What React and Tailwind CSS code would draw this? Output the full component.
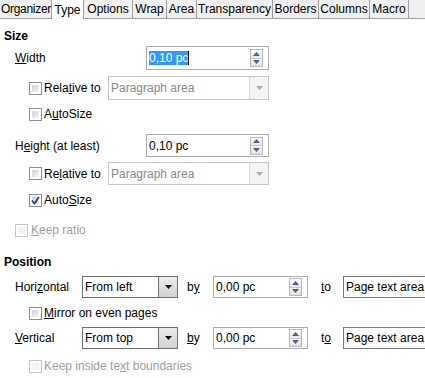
const TABS = [
  { label: "Organizer", w: "w-[52px]", cls: "justify-end tracking-[-0.3px]" },
  { label: "Type", w: "w-[32px]", active: true },
  { label: "Options", w: "w-[49px]" },
  { label: "Wrap", w: "w-[34px]" },
  { label: "Area", w: "w-[30px]" },
  { label: "Transparency", w: "w-[76px]" },
  { label: "Borders", w: "w-[46px]" },
  { label: "Columns", w: "w-[51px]" },
  { label: "Macro", w: "w-[39px]" },
];

function Arrow({ up, color = "#4d5f85" }) {
  return (
    <svg width="7" height="4" viewBox="0 0 7 4">
      <path d={up ? "M0 4 L3.5 0 L7 4 Z" : "M0 0 L7 0 L3.5 4 Z"} fill={color} />
    </svg>
  );
}

function Spin() {
  return (
    <div className="w-[13px] h-[18px] border border-[#b8b8b8] flex flex-col shrink-0">
      <div className="flex-1 flex items-center justify-center bg-gradient-to-b from-[#fbfbfb] to-[#e9e9e9] border-b border-[#c8c8c8]">
        <Arrow up />
      </div>
      <div className="flex-1 flex items-center justify-center bg-gradient-to-b from-[#f4f4f4] to-[#e2e2e2]">
        <Arrow />
      </div>
    </div>
  );
}

function SpinField({ value, w, selected }) {
  return (
    <div className={`${w} h-full border border-[#abadb3] bg-white flex items-center pl-[2px] pr-[5px] shrink-0`}>
      <div className="flex-1 flex items-center">
        {selected ? (
          <>
            <span className="bg-[#3399ff] text-white h-[14px] flex items-center">{value}</span>
            <span className="w-px h-[14px] bg-black" />
          </>
        ) : (
          value
        )}
      </div>
      <Spin />
    </div>
  );
}

function Combo({ value, w, disabled }) {
  return (
    <div
      className={`${w} h-full border flex shrink-0 bg-white ${
        disabled ? "border-[#c7c7c7] text-[#8a8a8a]" : "border-[#707070]"
      }`}
    >
      <div className="flex-1 flex items-center pl-[2px]">{value}</div>
      <div
        className={`w-[19px] flex items-center justify-center border-l ${
          disabled
            ? "border-[#dadada] bg-[#f4f4f4]"
            : "border-[#707070] bg-gradient-to-b from-[#ececec] to-[#d2d2d2]"
        }`}
      >
        <Arrow color={disabled ? "#a8a8a8" : "#000"} />
      </div>
    </div>
  );
}

function Check({ checked, disabled }) {
  return (
    <div
      className={`w-[13px] h-[13px] border bg-white p-[2px] shrink-0 relative ${
        disabled ? "border-[#c6c6c6]" : "border-[#8e8f8f]"
      }`}
    >
      <div
        className={`w-full h-full ${
          disabled ? "bg-[#f4f4f4]" : "bg-gradient-to-br from-[#d2d2d2] to-[#f6f6f6]"
        }`}
      />
      {checked && (
        <svg className="absolute left-0 top-0" width="11" height="11" viewBox="0 0 11 11">
          <path d="M2 5.5 L4.5 8.5 L9 2" fill="none" stroke="#2a3f7a" strokeWidth="1.8" />
        </svg>
      )}
    </div>
  );
}

function CheckRow({ children, checked, disabled, indent = "ml-[29px]", gap = "gap-[2px]", mt }) {
  return (
    <div className={`${mt} h-[14px] flex items-center ${indent} ${gap} ${disabled ? "text-[#a0a0a0]" : ""}`}>
      <Check checked={checked} disabled={disabled} />
      <span className="whitespace-nowrap">{children}</span>
    </div>
  );
}

function PosRow({ label, combo, by, to, mt }) {
  return (
    <div className={`${mt} h-[22px] flex items-center pl-[15px] whitespace-nowrap`}>
      <div className="w-[67px] shrink-0">{label}</div>
      <Combo value={combo} w="w-[96px]" />
      <div className="w-[26px] ml-[9px] shrink-0">{by}</div>
      <SpinField value="0,00 pc" w="w-[95px]" />
      <div className="w-[22px] ml-[13px] shrink-0">{to}</div>
      <div className="w-[120px] h-full border border-[#7a7a7a] flex items-center pl-[2px] shrink-0">
        Page text area
      </div>
    </div>
  );
}

export default function App() {
  return (
    <div className="w-[425px] h-[378px] overflow-hidden bg-white text-black text-[12px] leading-none font-['Liberation_Sans',Arial,sans-serif]">
      {/* Tabs */}
      <div className="flex h-[19px] bg-[#f0f0f0]">
        {TABS.map((t) => (
          <div
            key={t.label}
            className={`${t.w} shrink-0 h-full flex items-center whitespace-nowrap overflow-hidden border-r border-[#a0a0a0] ${
              t.cls || "justify-center"
            } ${t.active ? "bg-white" : "border-b"}`}
          >
            {t.label}
          </div>
        ))}
        <div className="flex-1 border-b border-[#a0a0a0]" />
      </div>

      <div className="flex flex-col">
        <div className="mt-[9px] h-[16px] pl-[4px] flex items-center font-bold">Size</div>

        <div className="mt-[2px] h-[24px] flex items-center pl-[15px]">
          <div className="w-[131px] shrink-0">
            <u>W</u>idth
          </div>
          <SpinField value="0,10 pc" w="w-[123px]" selected />
        </div>

        <div className="mt-[6px] h-[24px] flex items-center pl-[29px]">
          <div className="w-[79px] shrink-0 flex items-center gap-[2px]">
            <Check />
            <span>
              Rela<u>t</u>ive to
            </span>
          </div>
          <Combo value="Paragraph area" w="w-[161px]" disabled />
        </div>

        <CheckRow mt="mt-[7px]">
          A<u>u</u>toSize
        </CheckRow>

        <div className="mt-[13px] h-[23px] flex items-center pl-[15px]">
          <div className="w-[131px] shrink-0">
            H<u>e</u>ight (at least)
          </div>
          <SpinField value="0,10 pc" w="w-[123px]" />
        </div>

        <div className="mt-[5px] h-[23px] flex items-center pl-[29px]">
          <div className="w-[79px] shrink-0 flex items-center gap-[2px]">
            <Check />
            <span>
              Re<u>l</u>ative to
            </span>
          </div>
          <Combo value="Paragraph area" w="w-[161px]" disabled />
        </div>

        <CheckRow mt="mt-[8px]" checked>
          Auto<u>S</u>ize
        </CheckRow>

        <CheckRow mt="mt-[16px]" disabled indent="ml-[15px]" gap="gap-[3px]">
          <u>K</u>eep ratio
        </CheckRow>

        <div className="mt-[17px] h-[16px] pl-[4px] flex items-center font-bold">Position</div>

        <PosRow
          mt="mt-[6px]"
          label={<>Hori<u>z</u>ontal</>}
          combo="From left"
          by={<>b<u>y</u></>}
          to={<><u>t</u>o</>}
        />

        <CheckRow mt="mt-[8px]">
          <u>M</u>irror on even pages
        </CheckRow>

        <PosRow
          mt="mt-[7px]"
          label={<><u>V</u>ertical</>}
          combo="From top"
          by={<><u>b</u>y</>}
          to={<>t<u>o</u></>}
        />

        <CheckRow mt="mt-[10px]" disabled>
          Keep inside te<u>x</u>t boundaries
        </CheckRow>
      </div>
    </div>
  );
}
